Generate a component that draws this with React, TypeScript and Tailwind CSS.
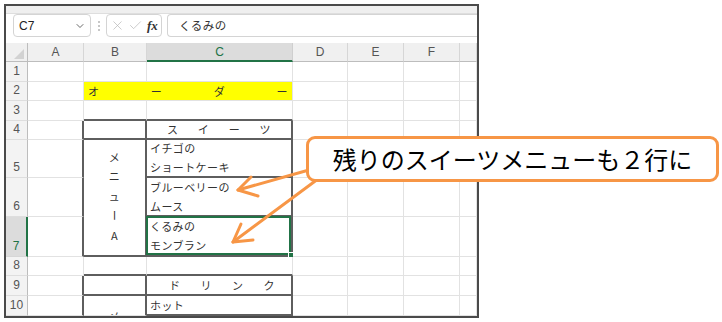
import { ChevronDown, X, Check } from "lucide-react";
import type { ReactNode } from "react";

const cellText = "text-[11px] tracking-[0.4px] text-[#333]";

function Cell({
  r = false,
  b = false,
  className = "",
  children,
}: {
  r?: boolean;
  b?: boolean;
  className?: string;
  children?: ReactNode;
}) {
  const right = r ? "border-r-2 border-r-[#5e5e5e]" : "border-r border-r-[#e2e2e2]";
  const bottom = b ? "border-b-2 border-b-[#5e5e5e]" : "border-b border-b-[#e2e2e2]";
  return <div className={`relative ${right} ${bottom} ${className}`}>{children}</div>;
}

function ColHead({ label, active = false }: { label: string; active?: boolean }) {
  return (
    <div
      className={
        active
          ? "flex items-center justify-center border-r border-r-[#cfcfcf] border-b-2 border-b-[#217346] bg-[#dcdcdc] pt-[1px] text-[12px] text-[#217346]"
          : "flex items-center justify-center border-r border-r-[#d6d6d6] border-b border-b-[#bdbdbd] bg-[#f0f0f0] text-[12px] text-[#555]"
      }
    >
      {label}
    </div>
  );
}

function RowHead({ n, active = false }: { n: number; active?: boolean }) {
  return (
    <div
      className={
        active
          ? "flex items-end justify-center border-r-2 border-r-[#217346] border-b border-b-[#d6d6d6] bg-[#dcdcdc] pb-[2px] text-[12px] leading-[15px] text-[#217346]"
          : "flex items-end justify-center border-r border-r-[#bdbdbd] border-b border-b-[#dedede] bg-[#f3f3f3] pb-[2px] text-[12px] leading-[15px] text-[#555]"
      }
    >
      {n}
    </div>
  );
}

function Rest() {
  return (
    <>
      <Cell />
      <Cell />
      <Cell />
      <Cell />
    </>
  );
}

function Spread({ chars, className }: { chars: string[]; className: string }) {
  return (
    <div className={`flex h-full items-center justify-between ${cellText} ${className}`}>
      {chars.map((c, i) => (
        <span key={i}>{c}</span>
      ))}
    </div>
  );
}

function TwoLines({ a, b }: { a: string; b: string }) {
  return (
    <div className={`flex h-full flex-col justify-center pl-[3px] leading-[19px] ${cellText}`}>
      <span>{a}</span>
      <span>{b}</span>
    </div>
  );
}

export default function App() {
  return (
    <div className="relative h-[322px] w-[722px] overflow-hidden bg-white pl-[4px] pt-[4px] font-['Noto_Sans_CJK_JP',sans-serif]">
      {/* excel window */}
      <div className="flex h-[314px] w-[475px] flex-col overflow-hidden border-2 border-[#4a4a4a]">
        <div className="h-[8px] border-b border-b-[#dedede] bg-[#efefef]" />

        {/* formula bar */}
        <div className="flex h-[29px] items-start font-['Liberation_Sans',sans-serif]">
          <div className="ml-[7px] flex h-[23px] w-[78px] items-center justify-between rounded-[4px] border border-[#d4d4d4] pl-[5px] pr-[4px] text-[12px] text-[#222]">
            <span>C7</span>
            <ChevronDown size={12} strokeWidth={1.6} className="text-[#444]" />
          </div>
          <div className="ml-[7px] flex h-[23px] flex-col items-center justify-center gap-[2px]">
            <span className="h-[2px] w-[2px] rounded-full bg-[#b5b5b5]" />
            <span className="h-[2px] w-[2px] rounded-full bg-[#b5b5b5]" />
            <span className="h-[2px] w-[2px] rounded-full bg-[#b5b5b5]" />
          </div>
          <div className="ml-[6px] flex h-[23px] w-[56px] items-center rounded-[4px] border border-[#d4d4d4] pl-[3px]">
            <X size={15} strokeWidth={1.1} className="text-[#b4b4b4]" />
            <Check size={15} strokeWidth={1.1} className="ml-[3px] text-[#b4b4b4]" />
            <span className="ml-[4px] font-['Liberation_Serif',serif] text-[13px] font-bold italic text-[#333]">
              fx
            </span>
          </div>
          <div className="ml-[5px] flex h-[23px] flex-1 items-center rounded-l-[4px] border border-r-0 border-[#d4d4d4] pl-[11px] font-['Noto_Sans_CJK_JP',sans-serif] text-[11.5px] tracking-[0.5px] text-[#333]">
            くるみの
          </div>
        </div>

        {/* sheet */}
        <div className="grid flex-1 grid-cols-[22px_56px_63px_146px_55px_56px_56px_1fr] grid-rows-[19px_20px_19px_20px_19px_38px_39px_40px_19px_20px_20px] font-['Liberation_Sans',sans-serif]">
          <div className="relative border-r border-r-[#bdbdbd] border-b border-b-[#bdbdbd] bg-[#f0f0f0]">
            <svg className="absolute bottom-[2px] right-[3px]" width="10" height="10" viewBox="0 0 10 10">
              <path d="M10 0 L10 10 L0 10 Z" fill="#d2d2d2" />
            </svg>
          </div>
          <ColHead label="A" />
          <ColHead label="B" />
          <ColHead label="C" active />
          <ColHead label="D" />
          <ColHead label="E" />
          <ColHead label="F" />
          <ColHead label="" />

          {/* 1 */}
          <RowHead n={1} />
          <Cell />
          <Cell />
          <Cell />
          <Rest />

          {/* 2 */}
          <RowHead n={2} />
          <Cell />
          <div className="col-span-2 border-r border-r-[#e2e2e2] border-b border-b-[#e2e2e2] bg-[#ffff00]">
            <Spread chars={["オ", "ー", "ダ", "ー"]} className="px-[4px] font-['Noto_Sans_CJK_JP',sans-serif]" />
          </div>
          <Rest />

          {/* 3 */}
          <RowHead n={3} />
          <Cell />
          <Cell b />
          <Cell b />
          <Rest />

          {/* 4 */}
          <RowHead n={4} />
          <Cell r />
          <Cell r b />
          <Cell r b>
            <Spread chars={["ス", "イ", "ー", "ツ"]} className="px-[20px] font-['Noto_Sans_CJK_JP',sans-serif]" />
          </Cell>
          <Rest />

          {/* 5 */}
          <RowHead n={5} />
          <Cell r />
          <Cell r b className="row-span-3">
            <div className={`flex h-full flex-col items-center justify-center pb-[2px] font-['Noto_Sans_CJK_JP',sans-serif] leading-[19.5px] ${cellText}`}>
              <span>メ</span>
              <span>ニ</span>
              <span>ュ</span>
              <span className="inline-block rotate-90">ー</span>
              <span>A</span>
            </div>
          </Cell>
          <Cell r b className="font-['Noto_Sans_CJK_JP',sans-serif]">
            <TwoLines a="イチゴの" b="ショートケーキ" />
          </Cell>
          <Rest />

          {/* 6 */}
          <RowHead n={6} />
          <Cell r />
          <Cell r b className="font-['Noto_Sans_CJK_JP',sans-serif]">
            <TwoLines a="ブルーベリーの" b="ムース" />
          </Cell>
          <Rest />

          {/* 7 */}
          <RowHead n={7} active />
          <Cell r />
          <Cell r b className="font-['Noto_Sans_CJK_JP',sans-serif]">
            <TwoLines a="くるみの" b="モンブラン" />
            <div className="absolute -left-[1px] -top-[1px] right-0 bottom-0 border-2 border-[#217346]" />
            <div className="absolute -bottom-[3px] -right-[3px] h-[6px] w-[6px] border border-white bg-[#217346]" />
          </Cell>
          <Rest />

          {/* 8 */}
          <RowHead n={8} />
          <Cell />
          <Cell b />
          <Cell b />
          <Rest />

          {/* 9 */}
          <RowHead n={9} />
          <Cell r />
          <Cell r b />
          <Cell r b>
            <Spread chars={["ド", "リ", "ン", "ク"]} className="pl-[22px] pr-[16px] font-['Noto_Sans_CJK_JP',sans-serif]" />
          </Cell>
          <Rest />

          {/* 10 */}
          <RowHead n={10} />
          <Cell r />
          <Cell r className="overflow-hidden">
            <div className={`pt-[12px] text-center font-['Noto_Sans_CJK_JP',sans-serif] ${cellText}`}>メ</div>
          </Cell>
          <Cell r b>
            <div className={`flex h-full items-center pl-[3px] font-['Noto_Sans_CJK_JP',sans-serif] ${cellText}`}>ホット</div>
          </Cell>
          <Rest />
        </div>
      </div>

      {/* arrows */}
      <svg className="pointer-events-none absolute left-0 top-0" width="722" height="322" viewBox="0 0 722 322">
        <g stroke="#f79646" strokeWidth="3" strokeLinecap="round" strokeLinejoin="round" fill="none">
          <path d="M316 168 L238 190" />
          <path d="M258 196 L238 190 L251 177" />
          <path d="M322 176 L233 242" />
          <path d="M253 240 L233 242 L241 224" />
        </g>
      </svg>

      {/* callout */}
      <div className="absolute left-[306px] top-[136px] flex h-[46px] w-[413px] items-center justify-center rounded-[9px] border-[3px] border-[#f79646] bg-white text-[24px] leading-none text-black">
        残りのスイーツメニューも２行に
      </div>
    </div>
  );
}
